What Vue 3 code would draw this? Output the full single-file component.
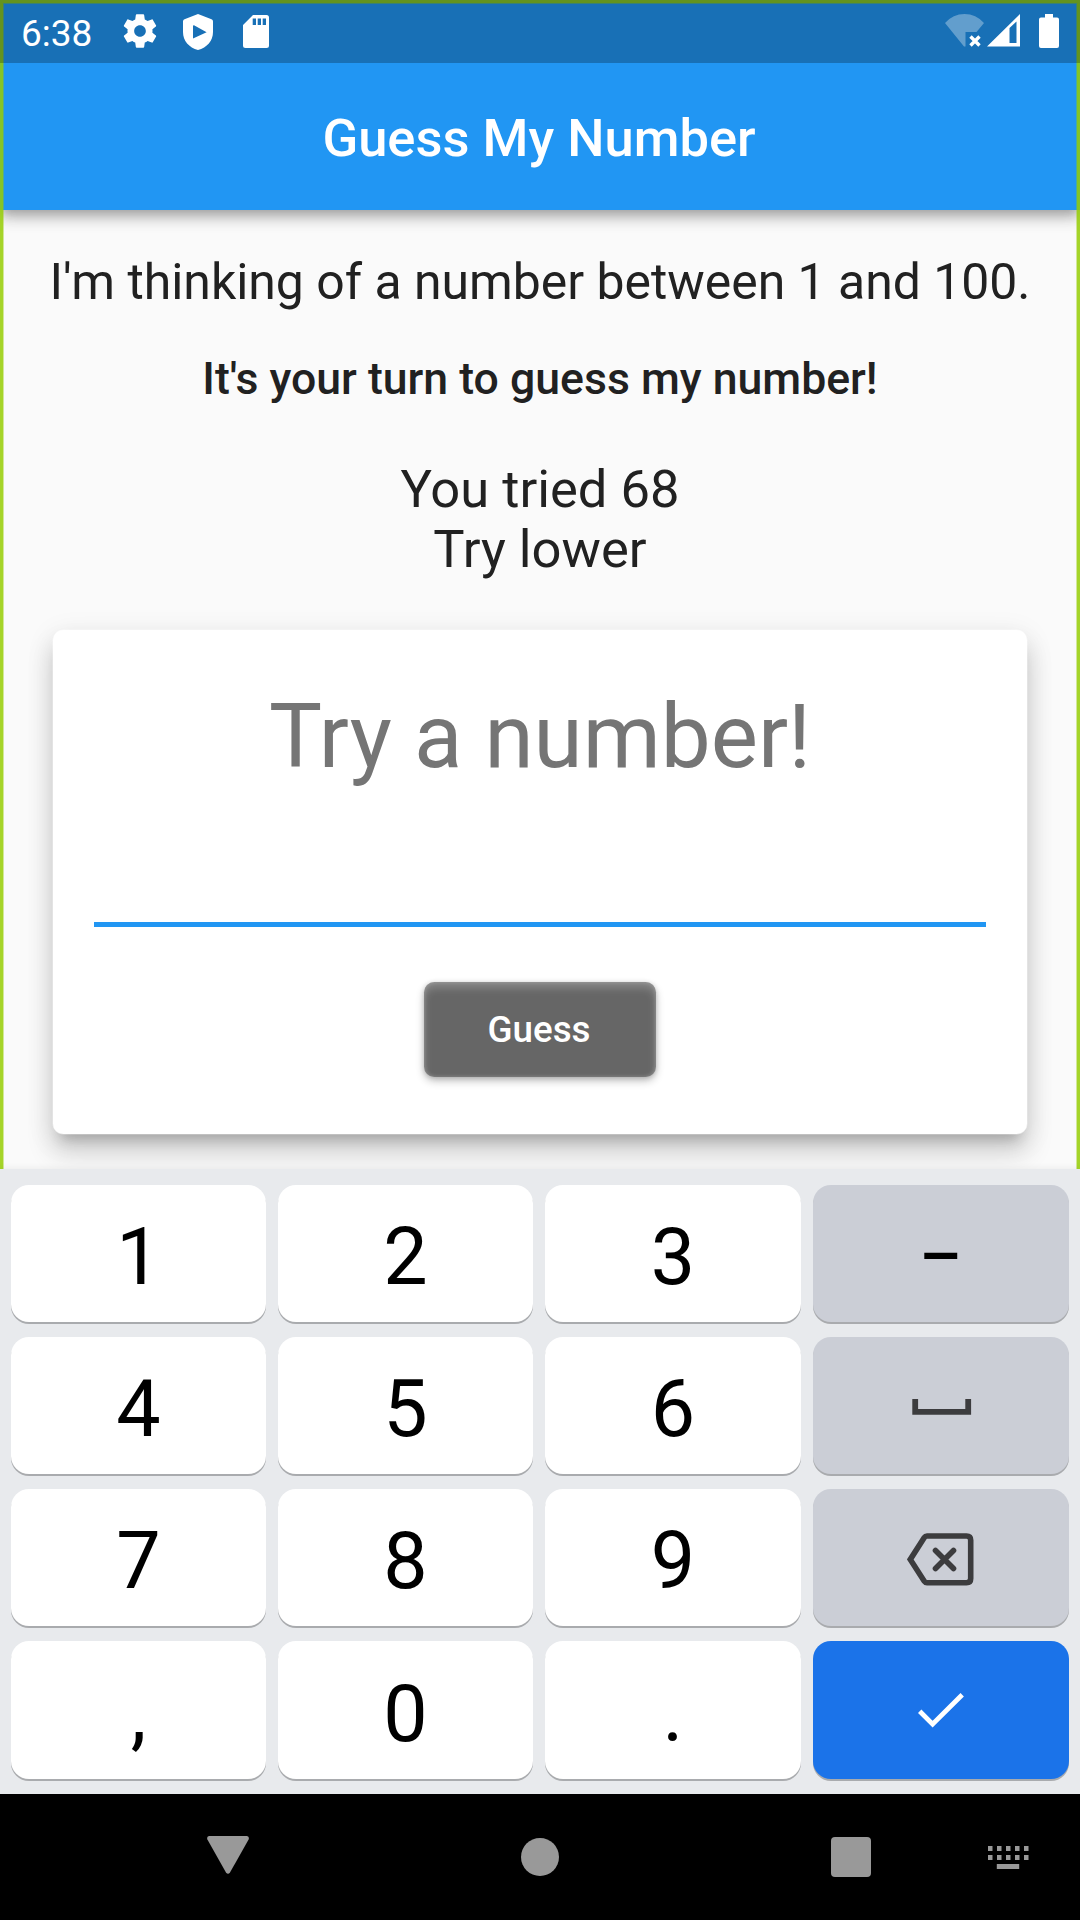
<script setup>
const keys = [
  { label: '1' }, { label: '2' }, { label: '3' }, { label: '–', tone: 'gray dash' },
  { label: '4' }, { label: '5' }, { label: '6' }, { icon: 'space', tone: 'gray' },
  { label: '7' }, { label: '8' }, { label: '9' }, { icon: 'backspace', tone: 'gray' },
  { label: ',', tone: 'low' }, { label: '0', tone: 'low' }, { label: '.', tone: 'low' }, { icon: 'check', tone: 'blue' },
]
const keyColumns = [0, 9, 18, 27, 36]
</script>

<template>
  <div class="screen">
    <header class="status-bar">
      <span class="time">6:38</span>
      <svg class="gear" width="40" height="40" viewBox="0 0 24 24" fill="#fff">
        <path d="M19.43 12.98c.04-.32.07-.64.07-.98s-.03-.66-.07-.98l2.11-1.65c.19-.15.24-.42.12-.64l-2-3.46c-.12-.22-.39-.3-.61-.22l-2.49 1c-.52-.4-1.08-.73-1.69-.98l-.38-2.65C14.46 2.18 14.25 2 14 2h-4c-.25 0-.46.18-.49.42l-.38 2.65c-.61.25-1.17.59-1.69.98l-2.49-1c-.23-.09-.49 0-.61.22l-2 3.46c-.13.22-.07.49.12.64l2.11 1.65c-.04.32-.07.65-.07.98s.03.66.07.98l-2.11 1.65c-.19.15-.24.42-.12.64l2 3.46c.12.22.39.3.61.22l2.49-1c.52.4 1.08.73 1.69.98l.38 2.65c.03.24.24.42.49.42h4c.25 0 .46-.18.49-.42l.38-2.65c.61-.25 1.17-.59 1.69-.98l2.49 1c.23.09.49 0 .61-.22l2-3.46c.12-.22.07-.49-.12-.64l-2.11-1.65zM12 15.5c-1.93 0-3.5-1.57-3.5-3.5s1.57-3.5 3.5-3.5 3.5 1.57 3.5 3.5-1.57 3.5-3.5 3.5z" />
      </svg>
      <svg class="shield" width="30" height="36" viewBox="0 0 30 36" fill="#fff">
        <path fill-rule="evenodd" d="M15 0L28.5 5.2Q30 5.8 30 7.4V18C30 27 24 33.6 15 36C6 33.6 0 27 0 18V7.4Q0 5.8 1.5 5.2ZM10 12.2V24.5L23.6 18.3L11 11.2Q10 11 10 12.2Z" />
      </svg>
      <svg class="sd" width="26" height="33" viewBox="0 0 26 33" fill="#fff">
        <path fill-rule="evenodd" d="M10 0H23.5Q26 0 26 2.5V30.5Q26 33 23.5 33H2.5Q0 33 0 30.5V10ZM9.7 3.6V10H13V3.6ZM14.7 3.6V10H18V3.6ZM19.7 3.6V10H23V3.6Z" />
      </svg>
      <svg class="wifi" width="40" height="34" viewBox="0 0 40 34">
        <path d="M0 9Q8 0 19.5 0T39 9L31.5 18H20.5V32.5H19Z" fill="#fff" fill-opacity=".32" />
        <path d="M25.5 22.5L34.5 31.5M34.5 22.5L25.5 31.5" stroke="#fff" stroke-width="3.4" />
      </svg>
      <svg class="signal" width="33" height="33" viewBox="0 0 33 33" fill="#fff">
        <path fill-rule="evenodd" d="M33 0V32.5H0ZM22.5 14V29H29.5V7.5Z" />
      </svg>
      <svg class="battery" width="20" height="34" viewBox="0 0 20 34" fill="#fff">
        <path d="M6 0H14V3.4H18Q20 3.4 20 5.4V32Q20 34 18 34H2Q0 34 0 32V5.4Q0 3.4 2 3.4H6Z" />
      </svg>
    </header>

    <div class="app-bar"><h1>Guess My Number</h1></div>

    <main class="content">
      <p class="intro">I'm thinking of a number between 1 and 100.</p>
      <p class="turn">It's your turn to guess my number!</p>
      <p class="result">You tried 68<br>Try lower</p>
      <section class="card">
        <div class="prompt">Try a number!</div>
        <div class="field"></div>
        <button class="guess">Guess</button>
      </section>
    </main>

    <section class="keyboard">
      <div v-for="(k, i) in keys" :key="i" class="key" :class="k.tone">
        <span v-if="k.label">{{ k.label }}</span>
        <svg v-else-if="k.icon === 'space'" class="i-space" width="60" height="16" viewBox="0 0 60 16">
          <path d="M3.2 0V12.8H56.2V0" fill="none" stroke="#3c3c3e" stroke-width="5.8" />
        </svg>
        <svg v-else-if="k.icon === 'backspace'" class="i-back" width="67" height="53" viewBox="0 0 67 53" fill="none" stroke="#3c3c3e">
          <path d="M20 3H59.5Q63.7 3 63.7 7.2V45.5Q63.7 49.7 59.5 49.7H20Q18.3 49.7 17.3 48.2L3.3 26.4L17.3 4.5Q18.3 3 20 3Z" stroke-width="5.6" />
          <path d="M28.5 17.5L46.5 35.5M46.5 17.5L28.5 35.5" stroke-width="5.6" stroke-linecap="round" />
        </svg>
        <svg v-else class="i-check" width="46" height="36" viewBox="0 0 46 36">
          <path d="M1.7 18.2L14.6 31.1L44.2 1.7" fill="none" stroke="#fff" stroke-width="4.8" />
        </svg>
      </div>
    </section>

    <nav class="nav-bar">
      <svg class="n-back" width="42" height="38" viewBox="0 0 42 38" fill="#999">
        <path d="M2 0H40Q42.6 .6 41.6 3.4L23 36.4Q21 39 19 36.4L.4 3.4Q-.6 .6 2 0Z" />
      </svg>
      <span class="n-home"></span>
      <span class="n-recent"></span>
      <svg class="n-kbd" width="41" height="23" viewBox="0 0 41 23" fill="#999">
        <template v-for="x in keyColumns" :key="x">
          <rect :x="x" y="0" width="4.5" height="5" />
          <rect :x="x" y="9" width="4.5" height="5" />
        </template>
        <rect x="8.8" y="18" width="22.4" height="5" />
      </svg>
    </nav>

    <div class="frame"></div>
  </div>
</template>

<style>
body {
  margin: 0;
  background: #000;
}
</style>

<style scoped>
.screen {
  position: relative;
  width: 1080px;
  height: 1920px;
  overflow: hidden;
  display: flex;
  flex-direction: column;
  background: #fafafa;
  font-family: Roboto, sans-serif;
}
.screen * { box-sizing: border-box; }
p, h1 { margin: 0; }
svg { display: block; flex: none; }

.status-bar {
  position: relative;
  z-index: 4;
  flex: none;
  height: 63px;
  display: flex;
  align-items: flex-start;
  padding-left: 21px;
  background: rgba(0, 0, 0, .25);
  color: #fff;
}
.time {
  width: 99px;
  font-size: 37px;
  line-height: 44px;
  padding-top: 12px;
}
.gear { margin-top: 11px; }
.shield { margin: 14px 0 0 23px; }
.sd { margin: 15px 0 0 30px; }
.wifi { margin: 14px 0 0 auto; }
.signal { margin: 14px 0 0 2px; }
.battery { margin: 14px 21px 0 19px; }

.app-bar {
  position: relative;
  z-index: 1;
  flex: none;
  height: 210px;
  margin-top: -63px;
  padding: 63px 2px 0 0;
  display: flex;
  align-items: center;
  justify-content: center;
  background: #2196f3;
  color: #fff;
  box-shadow: 0 5px 10px -2px rgba(0, 0, 0, .2), 0 10px 13px rgba(0, 0, 0, .14), 0 2px 20px rgba(0, 0, 0, .12);
}
h1 {
  font-size: 52.5px;
  font-weight: 500;
  line-height: 62px;
  padding-top: 2px;
}

.content {
  flex: none;
  height: 959px;
  padding: 42px 53px 0;
  display: flex;
  flex-direction: column;
  align-items: center;
  text-align: center;
  color: #212121;
  white-space: nowrap;
}
.intro { font-size: 49.9px; line-height: 60px; }
.turn { margin-top: 37px; font-size: 44.6px; font-weight: 500; line-height: 60px; }
.result { margin-top: 50px; font-size: 52.5px; line-height: 60px; }
.card {
  flex: none;
  align-self: stretch;
  margin-top: 51px;
  height: 504px;
  padding: 52px 41px 0;
  border-radius: 10.5px;
  background: #fff;
  display: flex;
  flex-direction: column;
  align-items: center;
  box-shadow: 0 0 0 .5px rgba(255, 255, 255, .5), 0 13px 13px -8px rgba(0, 0, 0, .2), 0 18px 26px 2px rgba(0, 0, 0, .14), 0 6px 28px 2px rgba(0, 0, 0, .08);
}
.prompt { font-size: 89px; line-height: 110px; color: #757575; }
.field {
  align-self: stretch;
  height: 135px;
  border-bottom: 5px solid #2196f3;
}
.guess {
  margin: 55px 0 0;
  width: 232px;
  height: 95px;
  padding: 0 2px 0 0;
  border: 0;
  border-radius: 10.5px;
  background: #666;
  color: #fff;
  font: 500 36.75px/95px Roboto, sans-serif;
  box-shadow: inset 0 6px 8px rgba(255, 255, 255, .22), inset 0 0 4px rgba(255, 255, 255, .25), 0 4px 8px rgba(0, 0, 0, .24), 0 1px 5px rgba(0, 0, 0, .16);
}

.keyboard {
  position: relative;
  z-index: 3;
  flex: none;
  height: 625px;
  padding: 16px 11px 15px;
  display: grid;
  grid-template-columns: 255px 255px 256px 256px;
  grid-template-rows: 137px 137px 137px 138px;
  column-gap: 12px;
  row-gap: 15px;
  background: #e8eaed;
  box-shadow: 0 -1px 7px rgba(0, 0, 0, .06);
}
.key {
  border-radius: 18px;
  background: #fff;
  box-shadow: 0 2px 0 #a9abae;
  color: #000;
  display: flex;
  justify-content: center;
  font-size: 79px;
  line-height: 144px;
}
.low { line-height: 146px; }
.gray { background: #cbced6; }
.blue { background: #1b73e9; }
.dash { padding-right: 1px; font-size: 66px; font-weight: 500; line-height: 144px; }
.i-space { margin: 62px 0 0 1px; }
.i-back { margin: 44px 2px 0 0; }
.i-check { margin-top: 52px; }

.nav-bar {
  flex: none;
  height: 126px;
  display: flex;
  align-items: flex-start;
  background: #000;
}
.n-back { margin: 42px 0 0 207px; }
.n-home { width: 38px; height: 38px; margin: 44px 0 0 272px; border-radius: 50%; background: #999; }
.n-recent { width: 40px; height: 40px; margin: 43px 0 0 272px; border-radius: 4px; background: #999; }
.n-kbd { margin: 52px 0 0 117px; }

.frame {
  position: absolute;
  z-index: 2;
  left: 0;
  top: 0;
  width: 1080px;
  height: 1180px;
  border: 3px solid rgba(149, 205, 3, .85);
  box-shadow: inset 0 0 0 1px rgba(149, 205, 3, .4);
}
</style>
